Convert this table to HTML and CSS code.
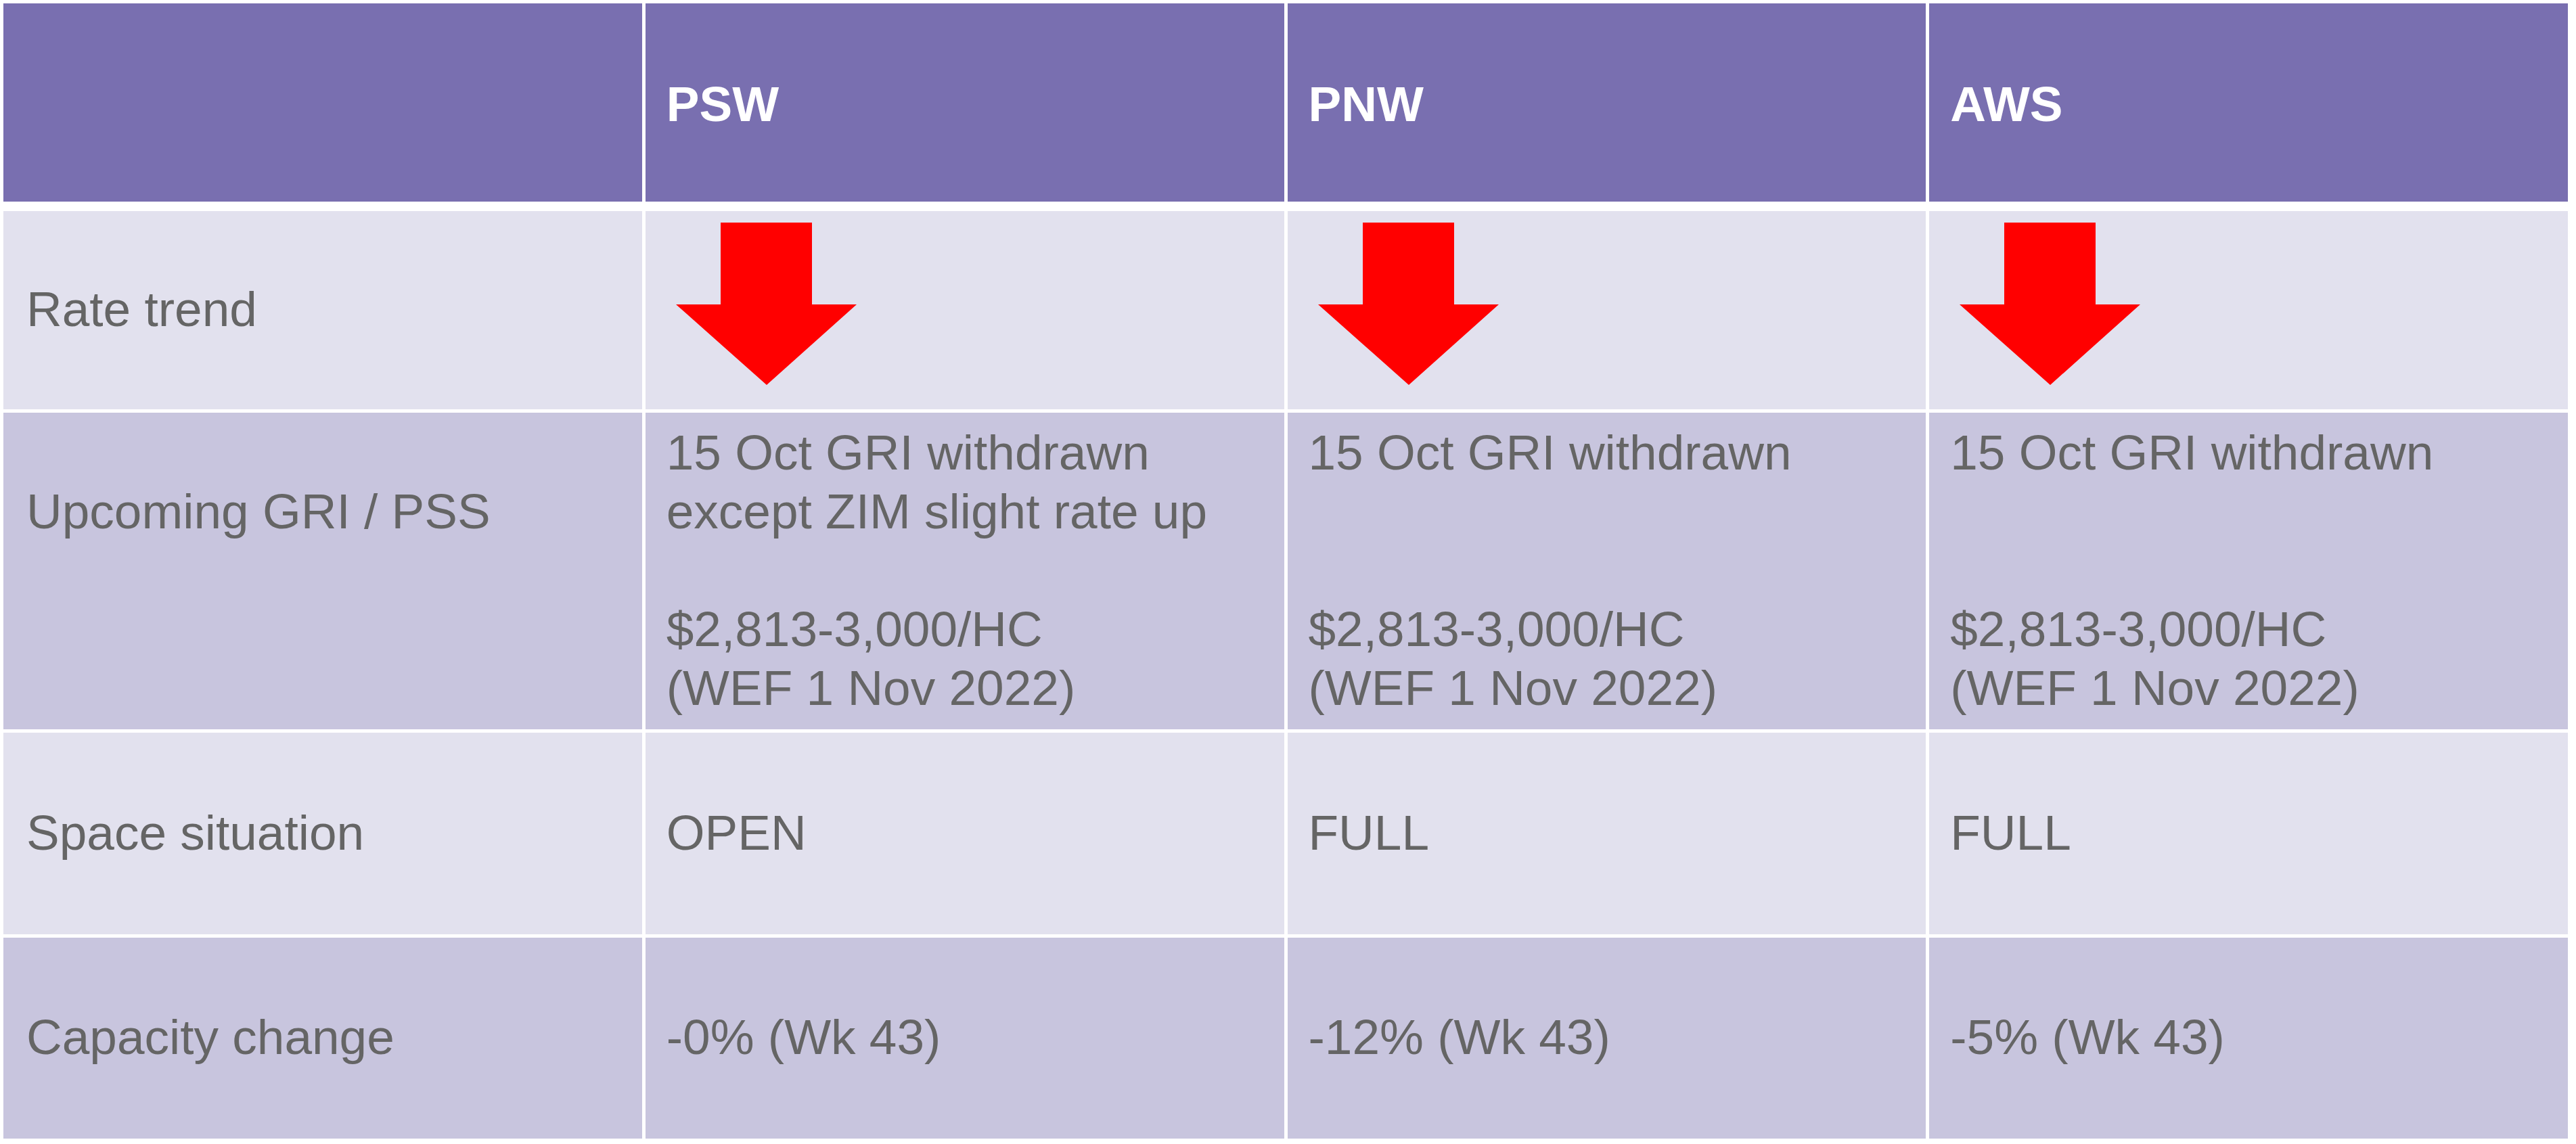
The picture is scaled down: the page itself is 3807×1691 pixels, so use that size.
FILE: index.html
```html
<!DOCTYPE html>
<html lang="en">
<head>
<meta charset="utf-8">
<title>Rate table</title>
<link rel="stylesheet" href="styles.css">
</head>
<body>
<div class="table">
  <div class="row head">
    <div class="cell"></div>
    <div class="cell">PSW</div>
    <div class="cell">PNW</div>
    <div class="cell">AWS</div>
  </div>
  <div class="row light r1">
    <div class="cell">Rate trend</div>
    <div class="cell arrow-cell"><svg class="arrow" viewBox="0 0 267 240" width="267" height="240"><polygon points="66,0 201,0 201,121 267,121 134,240 0,121 66,121" fill="#ff0000"/></svg></div>
    <div class="cell arrow-cell"><svg class="arrow" viewBox="0 0 267 240" width="267" height="240"><polygon points="66,0 201,0 201,121 267,121 134,240 0,121 66,121" fill="#ff0000"/></svg></div>
    <div class="cell arrow-cell"><svg class="arrow" viewBox="0 0 267 240" width="267" height="240"><polygon points="66,0 201,0 201,121 267,121 134,240 0,121 66,121" fill="#ff0000"/></svg></div>
  </div>
  <div class="row dark r2">
    <div class="cell label-top">Upcoming GRI / PSS</div>
    <div class="cell top">15 Oct GRI withdrawn<br>except ZIM slight rate up<br><br>$2,813-3,000/HC<br>(WEF 1 Nov 2022)</div>
    <div class="cell top">15 Oct GRI withdrawn<br><br><br>$2,813-3,000/HC<br>(WEF 1 Nov 2022)</div>
    <div class="cell top">15 Oct GRI withdrawn<br><br><br>$2,813-3,000/HC<br>(WEF 1 Nov 2022)</div>
  </div>
  <div class="row light r3">
    <div class="cell">Space situation</div>
    <div class="cell">OPEN</div>
    <div class="cell">FULL</div>
    <div class="cell">FULL</div>
  </div>
  <div class="row dark r4">
    <div class="cell">Capacity change</div>
    <div class="cell">-0% (Wk 43)</div>
    <div class="cell">-12% (Wk 43)</div>
    <div class="cell">-5% (Wk 43)</div>
  </div>
</div>
</body>
</html>
```

FILE: styles.css
```css
html, body {
  margin: 0;
  padding: 0;
  background: #ffffff;
}

body {
  padding: 5px 0 0 5px;
  font-family: "Liberation Sans", Arial, sans-serif;
  font-size: 73px;
  line-height: 87px;
  color: #656565;
}

.table {
  width: 3790px;
  display: flex;
  flex-direction: column;
  gap: 5px;
}

.row {
  display: grid;
  grid-template-columns: repeat(4, 1fr);
  column-gap: 5px;
}

.cell {
  display: flex;
  align-items: center;
  padding-left: 31px;
  padding-bottom: 4px;
  white-space: nowrap;
}

.row .cell:first-child {
  padding-left: 34px;
}

.head {
  height: 293px;
  margin-bottom: 9px;
}

.head .cell {
  background: #796fb0;
  color: #ffffff;
  font-weight: bold;
  padding-top: 4px;
  padding-bottom: 0;
}

.light .cell {
  background: #e2e1ee;
}

.dark .cell {
  background: #c8c5de;
}

.r1 { height: 293px; }
.r2 { height: 468px; }
.r3 { height: 298px; }
.r4 { height: 297px; }

.row .arrow-cell {
  align-items: flex-start;
  padding-left: 45px;
  padding-top: 17px;
  padding-bottom: 0;
}

.arrow {
  display: block;
}

.top {
  align-items: flex-start;
  padding-top: 15px;
}

.row .label-top {
  align-items: flex-start;
  padding-top: 102px;
}
```
